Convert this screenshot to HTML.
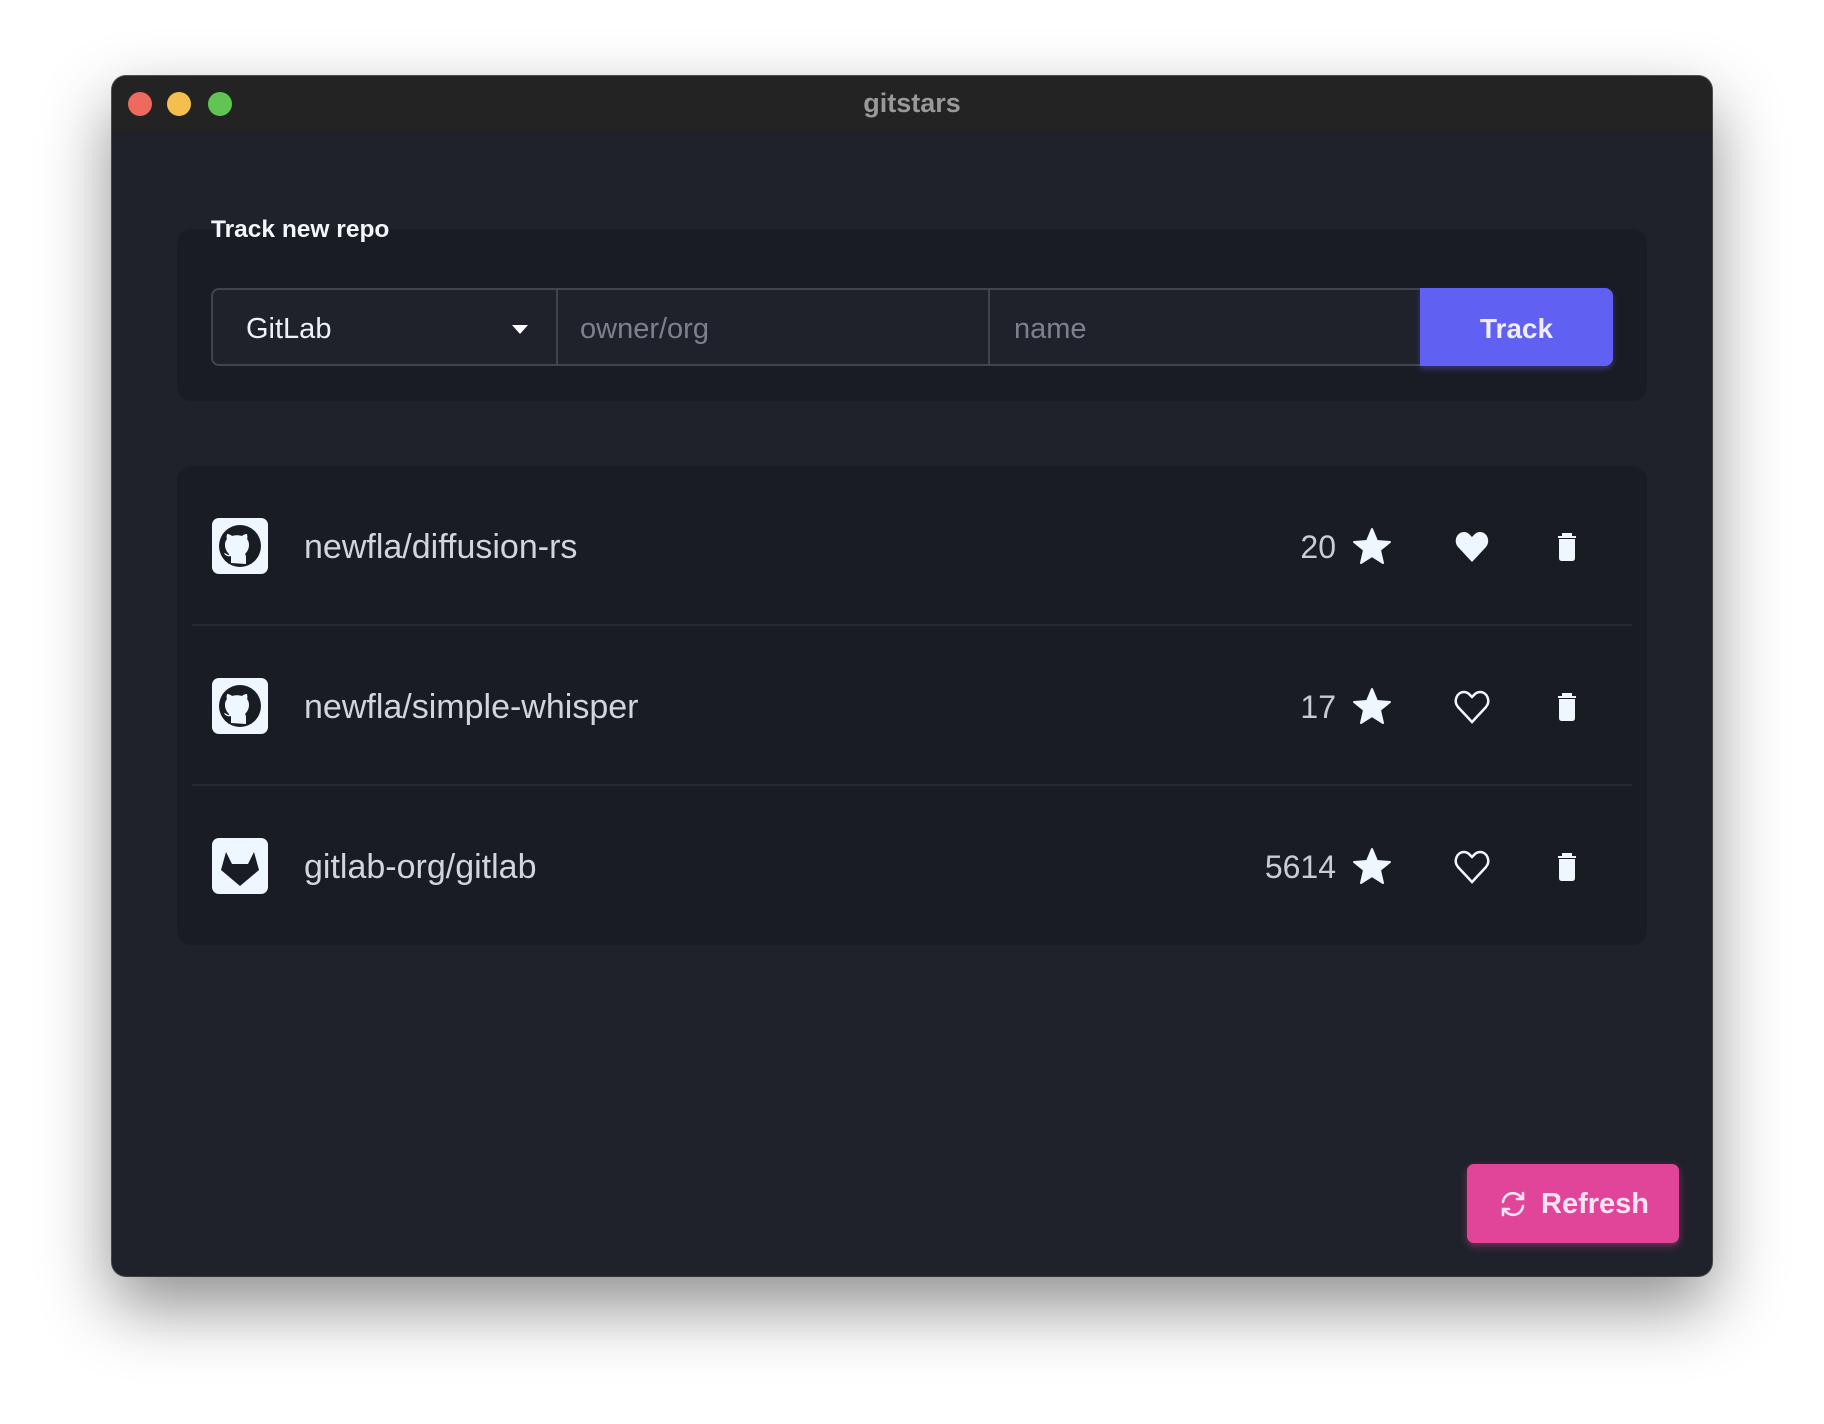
<!DOCTYPE html>
<html><head><meta charset="utf-8"><style>
*{margin:0;padding:0;box-sizing:border-box}
body{width:1824px;height:1424px;background:#fff;font-family:"Liberation Sans",sans-serif;position:relative;overflow:hidden}
.win{position:absolute;left:112px;top:76px;width:1600px;height:1200px;background:#1f222a;border-radius:14px;overflow:hidden;box-shadow:0 30px 70px rgba(0,0,0,.45),0 0 0 1px #555}
.tb{position:absolute;left:0;top:0;right:0;height:55px;background:#232323;}
.tl{position:absolute;top:16px;width:24px;height:24px;border-radius:50%}
.title{position:absolute;left:0;right:0;top:12px;text-align:center;color:#999;font-weight:bold;font-size:27px}
.card{position:absolute;left:65px;width:1470px;background:#1a1c23;border-radius:14px}
.lbl{position:absolute;left:99px;top:140px;color:#f3f6fb;font-weight:bold;font-size:24.5px}
.inp{position:absolute;top:212px;height:78px;border:2px solid #40444c;background:#1f222a;font-size:29px;line-height:79px;padding-left:34px}
.row{position:absolute;left:0;width:1470px;height:160px}
.ic{position:absolute;left:35px;top:52px;width:56px;height:56px;background:#eef7ff;border-radius:7px}
.nm{position:absolute;left:127px;top:1px;line-height:160px;font-size:34px;color:#d0d5df}
.ct{position:absolute;right:311px;line-height:160px;font-size:32px;color:#c8ccd6;top:1px}
.sv{position:absolute}
.div{position:absolute;left:15px;width:1440px;height:2px;background:#262930}
</style></head><body>
<div class="win">
 <div class="tb">
  <div class="tl" style="left:16px;background:#ee6a5e"></div>
  <div class="tl" style="left:55px;background:#f5bf4f"></div>
  <div class="tl" style="left:96px;background:#61c554"></div>
  <div class="title">gitstars</div>
 </div>
 <div class="card" style="top:153px;height:172px"></div>
 <div class="lbl">Track new repo</div>
 <div class="inp" style="left:99px;width:347px;border-radius:8px 0 0 8px;color:#eef2f8;border-right:none;padding-left:33px">GitLab
  <svg style="position:absolute;right:30px;top:35px" width="16" height="10"><path d="M0 0H16L8 9Z" fill="#fff"/></svg></div>
 <div class="inp" style="left:444px;width:434px;color:#7c818b;padding-left:22px">owner/org</div>
 <div class="inp" style="left:878px;width:432px;border-left:none;color:#7c818b;padding-left:24px">name</div>
 <div style="position:absolute;left:1308px;top:212px;width:193px;height:78px;background:#6060f3;border-radius:0 8px 8px 0;color:#eef;font-weight:bold;font-size:28px;text-align:center;line-height:81px;box-shadow:0 3px 6px rgba(90,90,240,.4)">Track</div>

 <div class="card" style="top:390px;height:479px">
  <div class="row" style="top:0">
   <div class="ic"><svg width="56" height="56" viewBox="0 0 56 56"><circle cx="28" cy="28" r="21" fill="#1a1c23"/><path d="M19 45V38c-4 1-6-1-7-3 2 0 3 2 5 2v-1c-2-2-4-5-4-9 0-3 1-5 2-6-1-2 0-4 0-5 2 0 4 1 5 2 3-1 7-1 10 0 1-1 3-2 5-2 0 1 1 3 0 5 1 1 2 3 2 6 0 4-2 7-4 9 1 1 1 3 1 4v6z" fill="#eef7ff"/></svg></div>
   <div class="nm">newfla/diffusion-rs</div><div class="ct">20</div>
  </div>
  <div class="div" style="top:158px"></div>
  <div class="row" style="top:160px">
   <div class="ic"><svg width="56" height="56" viewBox="0 0 56 56"><circle cx="28" cy="28" r="21" fill="#1a1c23"/><path d="M19 45V38c-4 1-6-1-7-3 2 0 3 2 5 2v-1c-2-2-4-5-4-9 0-3 1-5 2-6-1-2 0-4 0-5 2 0 4 1 5 2 3-1 7-1 10 0 1-1 3-2 5-2 0 1 1 3 0 5 1 1 2 3 2 6 0 4-2 7-4 9 1 1 1 3 1 4v6z" fill="#eef7ff"/></svg></div>
   <div class="nm">newfla/simple-whisper</div><div class="ct">17</div>
  </div>
  <div class="div" style="top:318px"></div>
  <div class="row" style="top:320px">
   <div class="ic"><svg width="56" height="56" viewBox="0 0 56 56"><path d="M14 14L20 26H36L42 14L47 32L28 48L9 32Z" fill="#1a1c23"/></svg></div>
   <div class="nm">gitlab-org/gitlab</div><div class="ct">5614</div>
  </div>
 </div>
 <svg class="sv" style="left:1240px;top:451px" width="300" height="400">
  <defs>
   <path id="st" d="M20 2L25 14L38 15L28 23L31 36L20 29L9 36L12 23L2 15L15 14Z" fill="#eef7ff" stroke="#eef7ff" stroke-width="2" stroke-linejoin="round"/>
   <path id="tr" d="M4 5H22M9 5V2H17V5M6 8H20V26Q20 28 18 28H8Q6 28 6 26Z" fill="#eef7ff" stroke="#eef7ff" stroke-width="2"/>
   <path id="ht" d="M18 33L4 18C-1 12 3 3 10 3C14 3 16 6 18 8C20 6 22 3 26 3C33 3 37 12 32 18Z"/>
  </defs>
  <use href="#st" x="0" y="0"/>
  <use href="#st" x="0" y="160"/>
  <use href="#st" x="0" y="320"/>
  <use href="#ht" x="102" y="2" fill="#eef7ff"/>
  <use href="#ht" x="102" y="162" fill="none" stroke="#eef7ff" stroke-width="2.5"/>
  <use href="#ht" x="102" y="322" fill="none" stroke="#eef7ff" stroke-width="2.5"/>
  <use href="#tr" x="202" y="5"/>
  <use href="#tr" x="202" y="165"/>
  <use href="#tr" x="202" y="325"/>
 </svg>
 <div style="position:absolute;left:1355px;top:1088px;width:212px;height:79px;background:#e0459a;border-radius:7px;color:#fbe3f1;font-weight:bold;font-size:29px;line-height:81px;padding-left:74px;box-shadow:0 3px 8px rgba(224,69,154,.45)">
  <svg style="position:absolute;left:32px;top:26px" width="28" height="28" viewBox="0 0 28 28" fill="none" stroke="#fbe3f1" stroke-width="2.6" stroke-linecap="round"><path d="M4 12A10 10 0 0 1 23 9M24 3V9H18M24 16A10 10 0 0 1 5 19M4 25V19H10"/></svg>Refresh</div>
</div>
</body></html>
